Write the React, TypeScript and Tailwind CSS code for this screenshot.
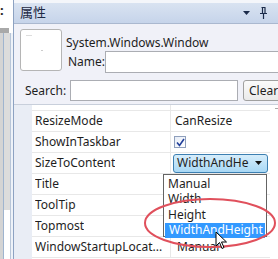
import React from "react";

const rows = [
  "ResizeMode",
  "ShowInTaskbar",
  "SizeToContent",
  "Title",
  "ToolTip",
  "Topmost",
  "WindowStartupLocation",
];

export default function App() {
  return (
    <div
      className="relative flex w-[278px] h-[259px] overflow-hidden bg-white text-[12px] text-[#1e1e1e]"
      style={{ fontFamily: '"Noto Sans", "Noto Sans CJK SC", sans-serif' }}
    >
      {/* left strip */}
      <div className="relative w-[13px] shrink-0 flex flex-col bg-white">
        <div className="h-[28px] relative">
          <span className="absolute left-0 top-[1px] text-[13px] font-bold text-[#222]">:</span>
        </div>
        <div className="h-[5px] w-[9px] bg-[#a9a9a9]" />
        <div className="flex-1 flex">
          <div className="w-[3px] bg-[#d4d4d4]" />
          <div className="w-[1px] bg-[#9fb4cf]" />
          <div className="w-[6px] h-[177px] bg-[#dcdcdc]" />
          <div className="w-[1px] bg-[#b8c6d9]" />
          <div className="w-[2px] bg-[#eef2f8]" />
        </div>
      </div>

      {/* main panel */}
      <div className="flex-1 flex flex-col border-l border-[#8da2c2] bg-[#f0f1f8]">
        <div className="h-[3px] bg-[#f4f6fa]" />
        {/* header */}
        <div className="h-[21px] flex items-center pl-[6px] bg-gradient-to-b from-[#d9e3f1] to-[#c6d4ea] border-b border-[#aab8cf]">
          <span className="text-[13px] text-[#1e2a44]">属性</span>
          <div className="ml-auto flex items-center">
            <svg width="7" height="4" viewBox="0 0 7 4"><path d="M0 0h7L3.5 4z" fill="#1b2b4a" /></svg>
            <svg className="ml-[10px]" width="7" height="12" viewBox="0 0 7 12">
              <path d="M1.5 0.5h4M2.5 0.5v6M5 0.5v6M0 6.5h7M3.5 6.5v5.5" stroke="#1b2b4a" strokeWidth="1.2" fill="none" />
            </svg>
            <svg className="ml-[11px] mr-[-2px]" width="8" height="8" viewBox="0 0 8 8">
              <path d="M1 1l6 6M7 1l-6 6" stroke="#1b2b4a" strokeWidth="2" />
            </svg>
          </div>
        </div>

        {/* info area */}
        <div className="flex pt-[5px] pl-[6px]">
          <div className="w-[42px] h-[42px] rounded-[3px] border border-[#b5b5b5] bg-white relative shrink-0">
            <div className="absolute left-[5px] top-[5px] w-[6px] h-[1px] bg-[#dddddd]" />
            <div className="absolute left-[20px] top-[20px] w-[2px] h-[1px] bg-[#cccccc]" />
          </div>
          <div className="flex-1 flex flex-col pl-[4px]">
            <div className="h-[20px] mt-[4px] flex items-center">System.Windows.Window</div>
            <div className="flex items-center mt-[-2px]">
              <span className="ml-[2px] w-[37px]">Name:</span>
              <div className="flex-1 h-[22px] border border-[#abadb3] bg-white" />
            </div>
          </div>
        </div>

        {/* search */}
        <div className="flex items-center mt-[7px] pl-[11px] h-[21px]">
          <span className="w-[45px]">Search:</span>
          <div className="w-[168px] h-[21px] border border-[#abadb3] bg-white" />
          <button className="ml-[5px] h-[21px] px-[5px] border border-[#a0a0a0] rounded-[3px] bg-gradient-to-b from-[#fbfbfb] to-[#eaeaea] text-left leading-none">
            Clear
          </button>
        </div>

        {/* property grid */}
        <div className="relative mt-[3px] flex-1 flex border-t border-[#c8cfdb] bg-white">
          <div className="w-[18px] bg-[#e9edf5] shrink-0" />
          <div className="flex-1 flex flex-col">
            <div className="h-[6px] flex border-b border-[#e8e8e8]">
              <div className="w-[139px] border-r border-[#e8e8e8]" />
            </div>
            {rows.map((r) => (
              <div key={r} className="h-[21px] flex border-b border-[#e8e8e8]">
                <div className="w-[139px] border-r border-[#e8e8e8] pl-[3px] flex items-center whitespace-nowrap overflow-hidden">
                  <span className="truncate">{r === "WindowStartupLocation" ? "WindowStartupLocat..." : r}</span>
                </div>
                <div className="flex-1 flex items-center pl-[2px] relative">
                  {r === "ResizeMode" && <span className="pl-[2px]">CanResize</span>}
                  {r === "ShowInTaskbar" && (
                    <div className="ml-[1px] w-[12px] h-[12px] border border-[#8f9fbc] bg-gradient-to-br from-[#e6ecf6] to-white flex items-center justify-center">
                      <svg width="9" height="9" viewBox="0 0 9 9">
                        <path d="M1 4.5l2.5 3L8 1" stroke="#213f9a" strokeWidth="1.6" fill="none" />
                      </svg>
                    </div>
                  )}
                  {r === "SizeToContent" && (
                    <div className="w-[95px] h-[19px] flex items-center pl-[3px] rounded-[3px] border border-[#3c7fb1] bg-gradient-to-b from-[#d6edfb] to-[#a8d8f5]">
                      <span>WidthAndHe</span>
                      <svg className="ml-auto mr-[5px]" width="7" height="4" viewBox="0 0 7 4"><path d="M0 0h7L3.5 4z" fill="#111" /></svg>
                    </div>
                  )}
                  {r === "WindowStartupLocation" && <span className="pl-[4px]">Manual</span>}
                </div>
              </div>
            ))}
          </div>
          <div className="w-[14px] shrink-0 relative bg-white">
            <span className="absolute left-[5px] top-[3px] w-[3px] h-[1px] bg-[#aaaaaa]" />
          </div>
        </div>
      </div>

      {/* dropdown popup */}
      <div className="absolute left-[163px] top-[174px] w-[104px] h-[63px] border border-[#646464] bg-white pt-[1px] flex flex-col">
        {["Manual", "Width", "Height"].map((t) => (
          <div key={t} className="h-[15.5px] flex items-center pl-[4px]">{t}</div>
        ))}
        <div className="h-[15.5px] flex items-center pl-[4px] mx-[1px] bg-[#3399ff] text-white">WidthAndHeight</div>
      </div>

      {/* red ellipse */}
      <svg className="absolute left-[143px] top-[197px]" width="134" height="52" viewBox="0 0 134 52">
        <ellipse cx="67" cy="26" rx="65" ry="24" fill="none" stroke="#e0505c" strokeWidth="2" />
      </svg>

      {/* cursor */}
      <svg className="absolute left-[215px] top-[231px]" width="12" height="19" viewBox="0 0 12 19">
        <path d="M1 1v14l3.5-3.5 2.5 6 2-1-2.5-5.5h5z" fill="white" stroke="black" strokeWidth="1" strokeLinejoin="round" />
      </svg>
    </div>
  );
}
